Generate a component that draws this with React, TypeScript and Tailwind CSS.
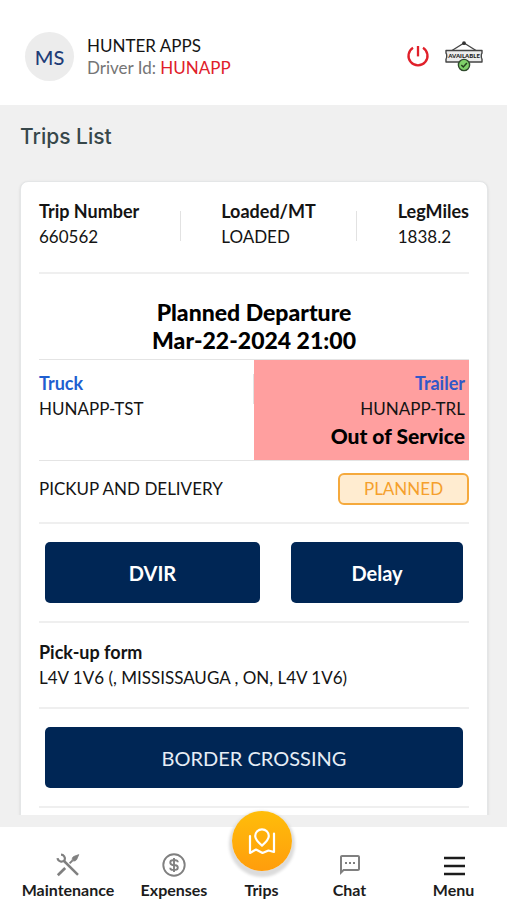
import type { ReactNode } from "react";
import { MdOutlineSms } from "react-icons/md";

function PowerIcon() {
  return (
    <svg width="24" height="24" viewBox="0 0 24 24" fill="none" stroke="#e0202a" strokeWidth="2.3" aria-hidden="true">
      <path d="M12 1v10.400" />
      <path d="M7 2.700a9.500 9.500 0 1 0 10 0" />
    </svg>
  );
}

function AvailableIcon() {
  return (
    <svg width="38" height="31" viewBox="0 0 38 31" fill="none" aria-hidden="true">
      <path d="M7 9.500 19 2l12 7.500" stroke="#444" strokeWidth="1.300" />
      <circle cx="19" cy="2.200" r="1.900" fill="#333" />
      <path
        d="M1 9.500h36v2.700c-1 .6-1 5.200 0 5.800v3H1v-3c1-.6 1-5.200 0-5.800z"
        fill="#ededed"
        stroke="#444"
        strokeWidth="1.400"
        strokeLinejoin="round"
      />
      <text
        x="19"
        y="17.400"
        textAnchor="middle"
        fill="#1c1c1c"
        className="font-['Lato',sans-serif] text-[6px] font-black"
      >
        AVAILABLE
      </text>
      <circle cx="19" cy="24" r="5.600" fill="#7fd069" stroke="#2f4a2c" strokeWidth="1.400" />
      <path d="m16.300 24 2 2 3.600-4" stroke="#24421f" strokeWidth="1.500" />
    </svg>
  );
}

function ToolsIcon() {
  return (
    <svg width="24" height="24" viewBox="0 0 24 24" fill="none" stroke="#808080" aria-hidden="true">
      <path d="M5 1.600a4 4 0 0 1 3.700 5.300A4 4 0 0 1 1.500 5.200" strokeWidth="2.200" />
      <path d="M8 8l14 13.800" strokeWidth="2.500" />
      <path d="M1.800 22.200l7.400-7.200" strokeWidth="2.700" />
      <path d="m13.600 10.400 3-3" strokeWidth="2" />
      <path d="m22.800 1.600-4.600 1.700a3 3 0 0 0-1.600 4.300 3 3 0 0 0 4.300-1.600z" fill="#808080" strokeWidth="0.800" />
    </svg>
  );
}

function ExpensesIcon() {
  return (
    <svg width="24" height="24" viewBox="0 0 24 24" fill="none" stroke="#808080" strokeWidth="1.900" aria-hidden="true">
      <circle cx="12" cy="12" r="10.700" />
      <path d="M12 5v14" />
      <path d="M15.800 9.300c0-1.300-1-2.100-2.400-2.100h-2.600c-1.500 0-2.500 1-2.500 2.300S9.200 11.700 10.700 12l2.600.3c1.500.2 2.500 1 2.500 2.300s-1 2.300-2.500 2.300h-2.600c-1.400 0-2.400-.8-2.400-2.200" />
    </svg>
  );
}

function MenuIcon() {
  return (
    <svg width="24" height="24" viewBox="0 0 24 24" stroke="#1c1c1c" strokeWidth="2.400" aria-hidden="true">
      <path d="M2 5h21M2 13h21M2 21h21" />
    </svg>
  );
}

function MapIcon() {
  return (
    <svg
      width="30"
      height="30"
      viewBox="0 0 30 30"
      fill="none"
      stroke="#fff"
      strokeWidth="2.200"
      strokeLinecap="round"
      strokeLinejoin="round"
      aria-hidden="true"
    >
      <path d="M15 19.700c-4-3.400-6.800-6-6.800-9.600a6.800 6.800 0 0 1 13.600 0c0 3.600-2.800 6.200-6.800 9.600z" />
      <path d="M3 10v17l6-3.500 6.500 3.500 6-2.500 5.500 1.500V7.500" />
    </svg>
  );
}

function Stat({ label, value }: { label: string; value: string }) {
  return (
    <div>
      <dt className="text-lg leading-[26px] font-bold">{label}</dt>
      <dd>{value}</dd>
    </div>
  );
}

function NavItem({ label, children }: { label: string; children: ReactNode }) {
  return (
    <a href="#" className="flex flex-col items-center gap-1">
      <span className="flex h-6 items-center">{children}</span>
      {label}
    </a>
  );
}

export default function App() {
  return (
    <div className="flex h-screen flex-col bg-[#f0f0f0] font-['Lato','Inter',sans-serif] text-[17px] leading-[26px] text-[#141414]">
      <header className="flex shrink-0 items-center bg-white pt-8 pr-6 pb-6 pl-[25px]">
        <div className="flex size-[49px] items-center justify-center rounded-full bg-[#ececec] text-[20px] font-medium text-[#1f3d78]">
          MS
        </div>
        <div className="ml-[13px] leading-[22px]">
          <p>HUNTER APPS</p>
          <p className="text-[#757575]">
            Driver Id: <span className="text-[#e0202a]">HUNAPP</span>
          </p>
        </div>
        <button type="button" aria-label="Log out" className="ml-auto">
          <PowerIcon />
        </button>
        <button type="button" aria-label="Availability" className="ml-[15px]">
          <AvailableIcon />
        </button>
      </header>

      <main className="mb-3 min-h-0 flex-1 overflow-y-auto pt-4 pr-[19px] pl-5 [scrollbar-width:none]">
        <h1 className="mb-7 font-['Inter',sans-serif] text-[21px] leading-8 font-medium text-[#37474a]">Trips List</h1>

        <article className="rounded-lg border border-[#e4e6e7] bg-white px-[18px] pt-4 pb-8 shadow-sm">
          <dl className="flex items-center justify-between border-b-2 border-[#efefef] pb-[22px]">
            <Stat label="Trip Number" value="660562" />
            <div className="mt-1 h-[30px] w-px bg-[#e2e2e2]" />
            <Stat label="Loaded/MT" value="LOADED" />
            <div className="mt-1 h-[30px] w-px bg-[#e2e2e2]" />
            <Stat label="LegMiles" value="1838.2" />
          </dl>

          <h2 className="border-b border-[#e4e4e4] pt-6 pb-[5px] text-center text-[23px] leading-7 font-black text-black">
            Planned Departure
            <br />
            Mar-22-2024 21:00
          </h2>

          <div className="grid grid-cols-2 border-b border-[#e4e4e4]">
            <div className="flex justify-between py-2.5">
              <div>
                <p className="text-lg leading-[26px] font-bold text-[#1f5fd0]">Truck</p>
                <p>HUNAPP-TST</p>
              </div>
              <div className="mt-1 h-[30px] w-px bg-[#e2e2e2]" />
            </div>
            <div className="bg-[#ff9f9f] py-2.5 pr-1 text-right">
              <p className="text-lg leading-[26px] font-bold text-[#3058c8]">Trailer</p>
              <p>HUNAPP-TRL</p>
              <p className="text-[21px] leading-7 font-black text-black">Out of Service</p>
            </div>
          </div>

          <div className="flex items-center justify-between border-b-2 border-[#efefef] pt-3 pb-[17px]">
            <p>PICKUP AND DELIVERY</p>
            <p className="w-[131px] rounded-md border-2 border-[#f5a93c] bg-[#ffecd0] text-center leading-7 text-[#f5a02c]">
              PLANNED
            </p>
          </div>

          <div className="flex gap-[31px] border-b-2 border-[#efefef] px-1.5 py-[18px] text-[20px] font-bold text-white">
            <button type="button" className="h-[61px] flex-[5] rounded-[5px] bg-[#002655]">
              DVIR
            </button>
            <button type="button" className="h-[61px] flex-[4] rounded-[5px] bg-[#002655]">
              Delay
            </button>
          </div>

          <div className="border-b-2 border-[#efefef] py-4">
            <p className="text-lg leading-[26px] font-bold">Pick-up form</p>
            <p>L4V 1V6 (, MISSISSAUGA , ON, L4V 1V6)</p>
          </div>

          <div className="border-b-2 border-[#efefef] px-1.5 py-[18px]">
            <button type="button" className="h-[61px] w-full rounded-[5px] bg-[#002655] text-[20px] text-[#e6edf5]">
              BORDER CROSSING
            </button>
          </div>
        </article>
      </main>

      <nav className="grid h-[73px] shrink-0 grid-cols-[112fr_100fr_75fr_101fr_107fr] bg-white pt-[26px] pl-3 text-base leading-[18px] font-bold text-[#1c1c1c]">
        <NavItem label="Maintenance">
          <ToolsIcon />
        </NavItem>
        <NavItem label="Expenses">
          <ExpensesIcon />
        </NavItem>
        <a href="#" className="relative flex flex-col items-center pt-7">
          <span className="absolute -top-[42px] flex size-[60px] items-center justify-center rounded-full bg-linear-to-b from-[#ffbd0a] to-[#ff9d0c] shadow-[0_3px_3px_3px_#dcdcdc]">
            <MapIcon />
          </span>
          Trips
        </a>
        <NavItem label="Chat">
          <MdOutlineSms size={24} color="#808080" />
        </NavItem>
        <NavItem label="Menu">
          <MenuIcon />
        </NavItem>
      </nav>
    </div>
  );
}
